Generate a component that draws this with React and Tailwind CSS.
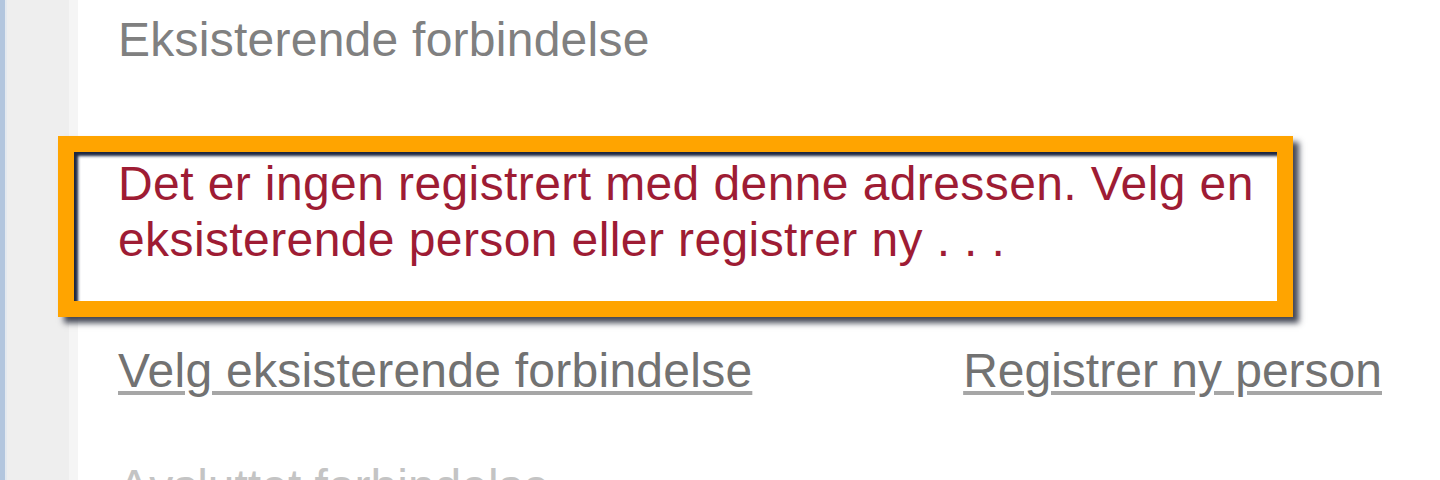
export default function App() {
  const font = { fontFamily: '"Liberation Sans", Arial, sans-serif' };
  return (
    <div className="flex h-[480px] w-[1440px] overflow-hidden bg-white" style={font}>
      <div className="flex w-[78px] shrink-0">
        <div className="w-[5px] bg-[#b3c6de]" />
        <div className="w-[2px] bg-[#e4e9ef]" />
        <div className="flex-1 bg-[#eeeeee]" />
        <div className="w-[9px] bg-[#f5f5f5]" />
      </div>
      <div className="relative z-10 flex min-w-0 flex-1 flex-col pl-[40px] pt-[12px]">
        <div className="shrink-0 text-[48px] leading-[56px] tracking-[0.25px] text-[#808080]">Eksisterende forbindelse</div>
        <div className="ml-[-60px] mt-[68px] box-border h-[181px] w-[1235px] shrink-0 border-[16px] border-[#ffa400] pl-[44px] pt-[4px] text-[48px] leading-[56px] tracking-[0.4px] text-[#9e1c34] shadow-[inset_4px_4px_3px_#1c2742,6px_6px_6px_rgba(35,40,55,0.85)]">
          Det er ingen registrert med denne adressen. Velg en eksisterende person eller registrer ny . . .
        </div>
        <div className="mt-[26px] flex shrink-0 justify-between pr-[58px] text-[48px] leading-[56px] text-[#727272]">
          <span className="tracking-[0.25px] underline decoration-[#a6a6a6] decoration-[4px] underline-offset-[4px]">Velg eksisterende forbindelse</span>
          <span className="underline decoration-[#a6a6a6] decoration-[4px] underline-offset-[4px]">Registrer ny person</span>
        </div>
        <div className="mt-[60px] shrink-0 text-[48px] leading-[56px] text-[#c4c4c4]">Avsluttet forbindelse</div>
      </div>
    </div>
  );
}
